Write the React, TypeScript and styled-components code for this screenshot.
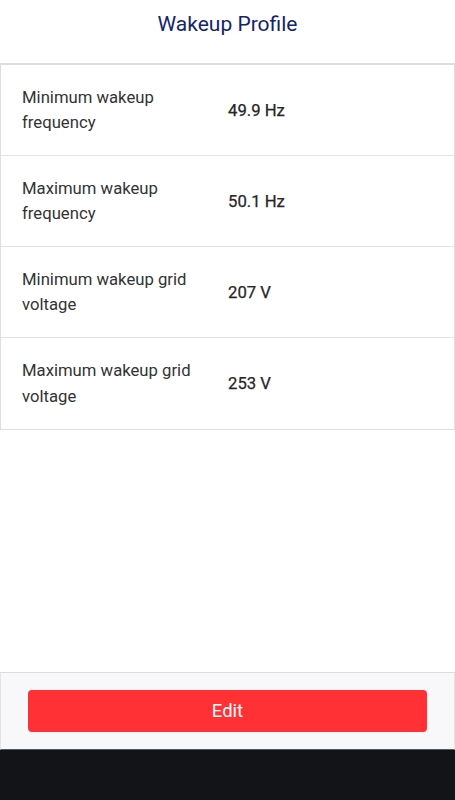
import React from 'react';
import styled, { createGlobalStyle } from 'styled-components';

const GlobalStyle = createGlobalStyle`
  html, body {
    margin: 0;
    padding: 0;
    background: #ffffff;
    font-family: Roboto, "Liberation Sans", Arial, sans-serif;
  }
`;

const Screen = styled.div`
  display: flex;
  flex-direction: column;
  height: 800px;
  width: 455px;
  background: #ffffff;
`;

const Header = styled.header`
  height: 63px;
  display: flex;
  align-items: center;
  justify-content: center;
  padding-bottom: 16px;
  box-sizing: border-box;
`;

const Title = styled.h1`
  margin: 0;
  font-size: 21px;
  font-weight: 400;
  color: #14246b;
`;

const Table = styled.div`
  border: 1px solid #dedede;
  border-top-width: 2px;
  display: flex;
  flex-direction: column;
`;

const Row = styled.div<{ $last?: boolean }>`
  display: grid;
  grid-template-columns: 206px 1fr;
  align-items: center;
  height: 91px;
  box-sizing: border-box;
  padding-left: 21px;
  border-bottom: ${(p) => (p.$last ? 'none' : '1px solid #e2e2e2')};
`;

const Label = styled.div`
  font-size: 16.7px;
  line-height: 25.5px;
  color: #333333;
  padding-right: 14px;
`;

const Value = styled.div`
  font-size: 16.7px;
  font-weight: 400;
  color: #262626;
  -webkit-text-stroke: 0.25px #262626;
`;

const Spacer = styled.div`
  flex: 1;
`;

const Footer = styled.footer`
  height: 78px;
  box-sizing: border-box;
  background: #f8f8fa;
  border-top: 1px solid #dcdcdc;
  border-left: 1px solid #e4e4e4;
  border-right: 1px solid #e4e4e4;
  border-bottom: 1px solid #55585c;
  padding: 17px 27px 0;
`;

const EditButton = styled.button`
  width: 100%;
  height: 42px;
  border: none;
  border-radius: 4px;
  background: #ff3134;
  color: #ffffff;
  font-family: Roboto, "Liberation Sans", Arial, sans-serif;
  font-size: 18.5px;
  cursor: pointer;
`;

const NavBar = styled.div`
  height: 50px;
  background: #121418;
`;

const App: React.FC = () => {
  const rows = [
    { label: 'Minimum wakeup frequency', value: '49.9 Hz' },
    { label: 'Maximum wakeup frequency', value: '50.1 Hz' },
    { label: 'Minimum wakeup grid voltage', value: '207 V' },
    { label: 'Maximum wakeup grid voltage', value: '253 V' },
  ];

  return (
    <Screen>
      <GlobalStyle />
      <Header>
        <Title>Wakeup Profile</Title>
      </Header>
      <Table>
        {rows.map((row, index) => (
          <Row key={index} $last={index === rows.length - 1}>
            <Label>{row.label}</Label>
            <Value>{row.value}</Value>
          </Row>
        ))}
      </Table>
      <Spacer />
      <Footer>
        <EditButton>Edit</EditButton>
      </Footer>
      <NavBar />
    </Screen>
  );
};

export default App;
